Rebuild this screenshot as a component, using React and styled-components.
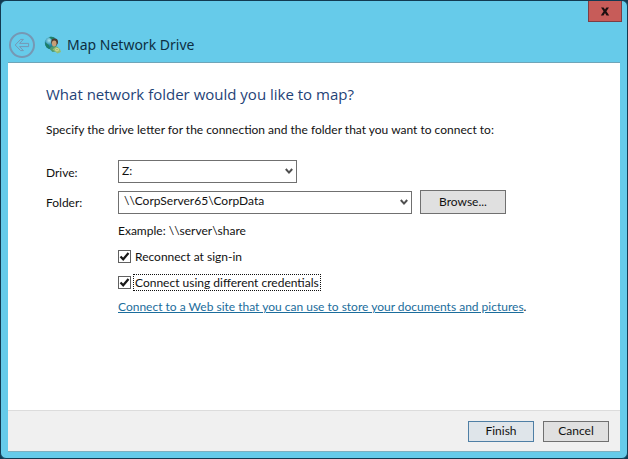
import React, { useState } from "react";
import styled, { createGlobalStyle } from "styled-components";

const App = () => {
  const [drive, setDrive] = useState("Z:");
  const [folder, setFolder] = useState("\\\\CorpServer65\\CorpData");
  const [reconnect, setReconnect] = useState(true);
  const [otherCredentials, setOtherCredentials] = useState(true);

  return (
    <>
      <GlobalStyle />
      <Window>
        <TitleBar>
          <CloseButton aria-label="Close">
            <svg width="10" height="9" viewBox="0 0 10 9">
              <path
                d="M1 0.5H3.6L5 2.6L6.4 0.5H9L6.4 4.3L9.2 8.5H6.5L5 6.1L3.5 8.5H0.8L3.6 4.3Z"
                fill="#1c0f10"
              />
            </svg>
          </CloseButton>
        </TitleBar>
        <Header>
          <BackButton aria-label="Back">
            <BackIcon />
          </BackButton>
          <DriveIcon />
          <Title>Map Network Drive</Title>
        </Header>
        <Panel>
          <Content>
            <Heading>What network folder would you like to map?</Heading>
            <Intro>
              Specify the drive letter for the connection and the folder that
              you want to connect to:
            </Intro>
            <Form>
              <FieldLabel htmlFor="drive">Drive:</FieldLabel>
              <SelectBox $narrow>
                <Select
                  id="drive"
                  value={drive}
                  onChange={(e) => setDrive(e.target.value)}
                >
                  <option>Z:</option>
                </Select>
                <Chevron />
              </SelectBox>
              <FieldLabel htmlFor="folder">Folder:</FieldLabel>
              <FolderRow>
                <SelectBox>
                  <Select
                    id="folder"
                    $indent
                    value={folder}
                    onChange={(e) => setFolder(e.target.value)}
                  >
                    <option>{"\\\\CorpServer65\\CorpData"}</option>
                  </Select>
                  <Chevron />
                </SelectBox>
                <Button $wide>Browse...</Button>
              </FolderRow>
              <Options>
                <Example>{"Example: \\\\server\\share"}</Example>
                <CheckLabel>
                  <Checkbox
                    type="checkbox"
                    checked={reconnect}
                    onChange={(e) => setReconnect(e.target.checked)}
                  />
                  <CheckText>Reconnect at sign-in</CheckText>
                </CheckLabel>
                <CheckLabel>
                  <Checkbox
                    type="checkbox"
                    checked={otherCredentials}
                    onChange={(e) => setOtherCredentials(e.target.checked)}
                  />
                  <CheckText $focused>
                    Connect using different credentials
                  </CheckText>
                </CheckLabel>
                <LinkLine>
                  <Link href="#">
                    Connect to a Web site that you can use to store your
                    documents and pictures
                  </Link>
                  .
                </LinkLine>
              </Options>
            </Form>
          </Content>
          <Footer>
            <Button $primary>Finish</Button>
            <Button>Cancel</Button>
          </Footer>
        </Panel>
      </Window>
    </>
  );
};

const BackIcon = () => (
  <svg width="28" height="28" viewBox="0 0 28 28" fill="none">
    <circle cx="14" cy="14" r="12" stroke="#7698b4" strokeWidth="2" />
    <path
      d="M7.2 14L12.6 8.4H15.4L11.6 12.4H20.6V15.6H11.6L15.4 19.6H12.6Z"
      stroke="#7698b4"
      strokeWidth="1"
    />
  </svg>
);

const DriveIcon = () => (
  <svg width="18" height="18" viewBox="0 0 18 18">
    <defs>
      <radialGradient id="globe" cx="0.35" cy="0.3" r="0.8">
        <stop offset="0" stopColor="#a8e4ee" />
        <stop offset="0.45" stopColor="#2a8fae" />
        <stop offset="1" stopColor="#0b4a68" />
      </radialGradient>
    </defs>
    <circle cx="7" cy="7" r="6.2" fill="url(#globe)" />
    <path d="M1 6Q3 8 5 9L6 13Q1 12 1 6Z" fill="#1d7f66" />
    <path d="M5 1Q8 0 11 2L8 4Z" fill="#1f8168" />
    <path d="M5.5 13Q7 9.6 10 10L14 11L15 15L8.5 16Z" fill="#4f9a70" />
    <circle cx="10.6" cy="6" r="3.4" fill="#4d3b30" />
    <ellipse cx="10.2" cy="7.6" rx="2.3" ry="3" fill="#c99f78" />
    <path d="M8.5 13.5L12 10.5L16 13L17 16L13.5 17.5Z" fill="#93bd74" />
    <circle cx="13" cy="13.6" r="1.9" fill="#c9d795" />
    <circle cx="13" cy="13.6" r="0.7" fill="#7ea566" />
  </svg>
);

const Chevron = () => (
  <ChevronSvg width="8" height="7" viewBox="0 0 8 7">
    <path
      d="M0.8 1L4 4.6L7.2 1"
      fill="none"
      stroke="#505050"
      strokeWidth="2"
    />
  </ChevronSvg>
);

const GlobalStyle = createGlobalStyle`
  * {
    box-sizing: border-box;
  }

  body {
    margin: 0;
    background: #123a52;
    color: #111;
    font-family: Lato, "Open Sans", sans-serif;
    font-size: 12px;
    line-height: 16px;
  }

  button,
  select {
    font: inherit;
    color: inherit;
  }
`;

const Window = styled.div`
  min-height: 100vh;
  display: flex;
  flex-direction: column;
  padding: 0 7px 6px;
  background: #66cbea;
  border: 1px solid #123a52;
  border-radius: 6px;
`;

const TitleBar = styled.div`
  display: flex;
  justify-content: flex-end;
  height: 27px;
`;

const CloseButton = styled.button`
  display: flex;
  align-items: center;
  justify-content: center;
  width: 34px;
  height: 21px;
  margin-right: -2px;
  padding: 0;
  background: #c75c59;
  border: 1px solid #7c3d45;
  border-top: 0;
`;

const Header = styled.div`
  display: flex;
  align-items: center;
  height: 34px;
`;

const BackButton = styled.button`
  display: flex;
  width: 28px;
  height: 28px;
  margin-right: 8px;
  padding: 0;
  background: none;
  border: 0;
`;

const Title = styled.h1`
  margin: 0 0 0 5px;
  color: #0d2f42;
  font-family: "Noto Sans", sans-serif;
  font-size: 14px;
  font-weight: 400;
  line-height: 20px;
`;

const Panel = styled.main`
  flex: 1;
  display: flex;
  flex-direction: column;
  background: #fff;
  border-top: 1px solid #6fa5b8;
  border-bottom: 1px solid #7fb0c0;
`;

const Content = styled.div`
  flex: 1;
  padding: 20px 38px;
`;

const Heading = styled.h2`
  margin: 0 0 17px;
  color: #1f4377;
  font-family: "Open Sans", sans-serif;
  font-size: 15px;
  font-weight: 400;
  line-height: 22px;
`;

const Intro = styled.p`
  margin: 0 0 22px;
`;

const Form = styled.form`
  display: grid;
  grid-template-columns: 72px 1fr;
  row-gap: 7px;
  align-items: center;
`;

const FieldLabel = styled.label`
  padding-top: 2px;
`;

const FolderRow = styled.div`
  display: flex;
  align-items: center;
  gap: 8px;
`;

const SelectBox = styled.div`
  position: relative;
  width: ${(props) => (props.$narrow ? "179px" : "294px")};
`;

const Select = styled.select`
  display: block;
  width: 100%;
  height: 23px;
  padding: 0 20px 2px ${(props) => (props.$indent ? "5px" : "3px")};
  appearance: none;
  background: #fff;
  border: 1px solid #707070;
  border-radius: 0;
`;

const ChevronSvg = styled.svg`
  position: absolute;
  top: 8px;
  right: 4px;
  pointer-events: none;
`;

const Button = styled.button`
  width: ${(props) => (props.$wide ? "86px" : "66px")};
  height: ${(props) => (props.$wide ? "24px" : "21px")};
  padding: 0;
  line-height: 16px;
  background: ${(props) => (props.$primary ? "#dfe5ea" : "#e0e0e0")};
  border: 1px solid ${(props) => (props.$primary ? "#4f7fa5" : "#707070")};
`;

const Options = styled.div`
  grid-column: 2;
`;

const Example = styled.p`
  margin: 2px 0 8px;
`;

const CheckLabel = styled.label`
  display: flex;
  align-items: center;
  gap: 2px;
  height: 18px;
  margin-bottom: 8px;
`;

const Checkbox = styled.input`
  width: 13px;
  height: 13px;
  margin: 0;
  appearance: none;
  background: #fff;
  border: 1px solid #606060;

  &:checked {
    background: #fff
      url("data:image/svg+xml,%3Csvg xmlns='http://www.w3.org/2000/svg' viewBox='0 0 11 11'%3E%3Cpath d='M1.5 5.5L4.2 8.3L9.5 2' fill='none' stroke='%23181818' stroke-width='2.2'/%3E%3C/svg%3E")
      center / 11px 11px no-repeat;
  }
`;

const CheckText = styled.span`
  padding: 0 1px;
  border: 1px ${(props) => (props.$focused ? "dotted #111" : "solid transparent")};
  line-height: 15px;
`;

const LinkLine = styled.p`
  margin: 0;
  white-space: nowrap;
`;

const Link = styled.a`
  color: #1b6d9c;
`;

const Footer = styled.footer`
  display: flex;
  align-items: center;
  justify-content: flex-end;
  gap: 9px;
  height: 41px;
  padding: 0 11px;
  background: #f0f0f0;
  border-top: 1px solid #dcdcdc;
`;

export default App;
